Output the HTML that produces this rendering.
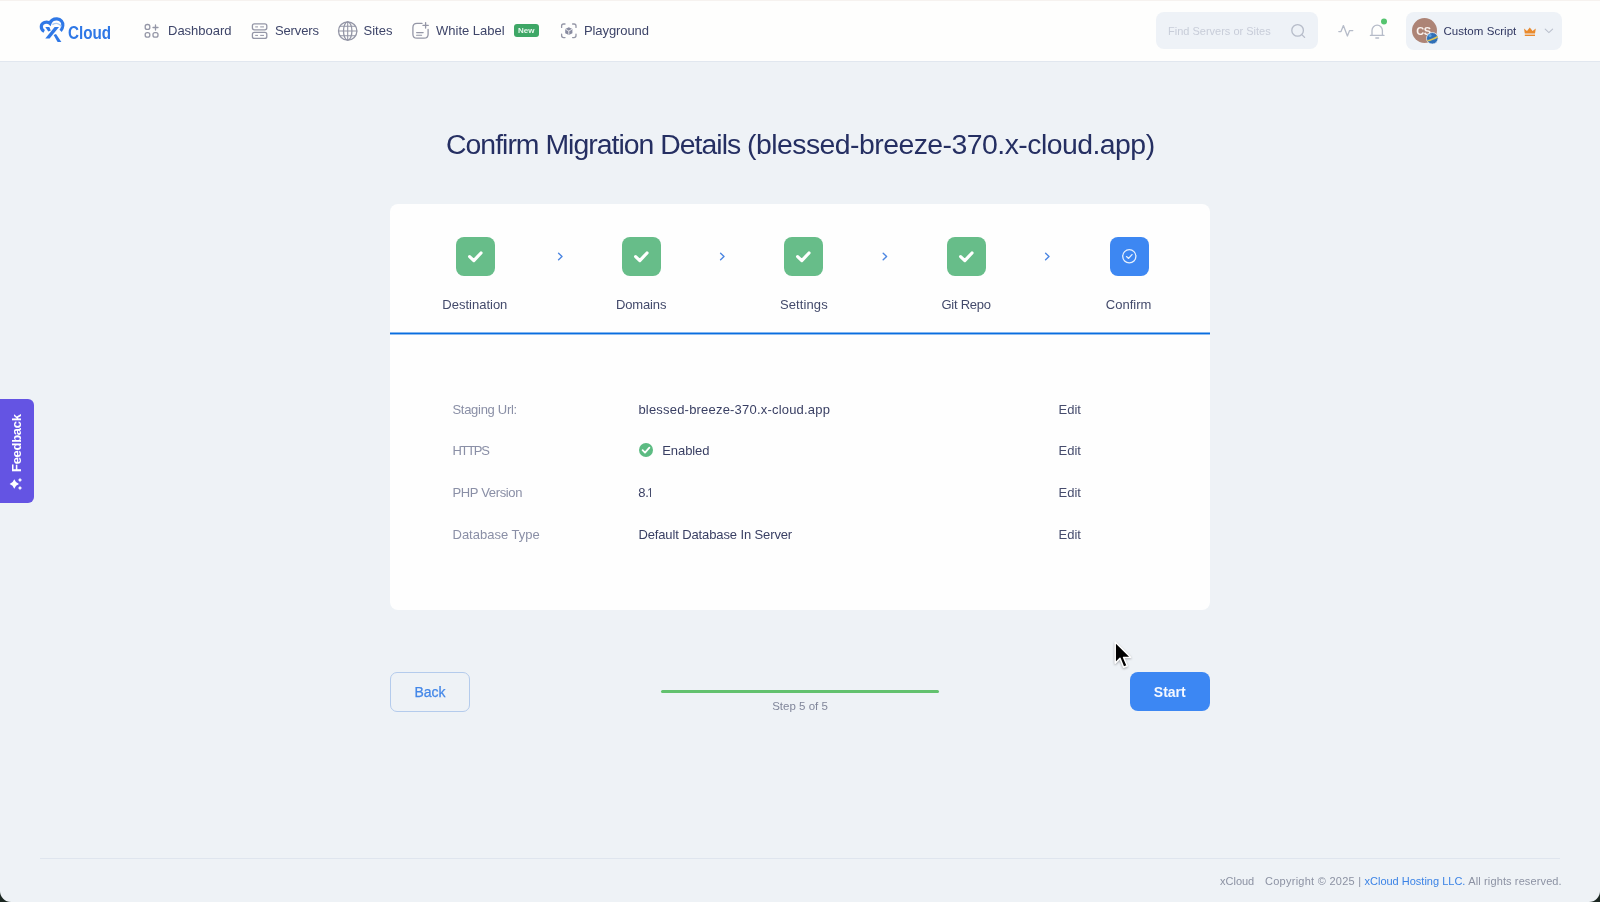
<!DOCTYPE html>
<html><head><meta charset="utf-8">
<style>
*{margin:0;padding:0;box-sizing:border-box}
html,body{width:1600px;height:902px;overflow:hidden;background:#1b2722}
body{font-family:"Liberation Sans",sans-serif;position:relative}
#page{will-change:transform;position:absolute;left:0;top:0;width:1600px;height:902px;background:#eef2f6;border-radius:0 0 11px 11px;overflow:hidden}
.abs{position:absolute}
svg.abs{overflow:visible}
.t{position:absolute;white-space:nowrap;line-height:1}
#hdr{position:absolute;left:0;top:0;width:1600px;height:62px;background:#fefefd;border-bottom:1px solid #e1e7ef}
#topline{position:absolute;left:0;top:0;width:1600px;height:1px;background:#f6f2ef}
.nav{color:#3e4569;font-size:13px;top:24px}
.card{position:absolute;left:390px;top:204px;width:820px;height:406px;background:#fefefe;border-radius:8px}
.stepbox{position:absolute;top:237px;width:39px;height:39px;border-radius:8px;background:#67bd89}
.stepbox svg{position:absolute;left:0;top:0}
.steplbl{position:absolute;top:298px;font-size:13px;color:#434a6b;white-space:nowrap;line-height:1}
.lbl{color:#8a8fa6;font-size:13px}
.val{color:#393f63;font-size:13px}
.edit{color:#464c6d;font-size:13px}
.ico{fill:none;stroke:#9496a6;stroke-width:1.3;stroke-linecap:round;stroke-linejoin:round}
</style></head><body>
<div id="page">
  <div id="hdr"></div>
  <div id="topline"></div>

  <!-- logo -->
  <svg class="abs" style="left:34px;top:12px" width="36" height="34" viewBox="0 0 36 34">
    <path d="M10.2,19.4 C6.4,17.6 6.2,12 10.4,10.6 C12.6,9.9 14.8,10.4 15.9,11.4 C17,8.4 19.8,6.8 23,6.9 C26.8,7 29.2,10 28.8,13.6 C28.6,15.8 27.8,17.6 26.6,18.8" fill="none" stroke="#2f78e6" stroke-width="3.2"/>
    <path d="M18.4,12.6 C21.8,10.6 26,11.2 27.4,14.6" fill="none" stroke="#a9c9f3" stroke-width="1.3"/>
    <polygon points="11.3,26.6 15.6,26.6 25,15 20.6,15" fill="#2f78e6"/>
    <polygon points="11.3,15 15.3,15 16.8,18.4 14.3,19.4" fill="#2f78e6"/>
    <polygon points="19.6,22.9 22,22 27.4,30 23.6,30" fill="#2f78e6"/>
  </svg>
  <div class="t" style="left:68px;top:25px;font-size:17.5px;font-weight:700;color:#2f78e6;transform:scaleX(0.87);transform-origin:0 0">Cloud</div>

  <!-- nav icons -->
  <svg class="abs" style="left:0;top:0" width="700" height="61">
    <g class="ico">
      <rect x="145.2" y="24.5" width="4.6" height="4.9" rx="2"/>
      <path d="M155.5,25 V30 M153,27.5 H158"/>
      <rect x="145.2" y="32.6" width="4.6" height="4.6" rx="2"/>
      <rect x="153" y="32.6" width="5" height="4.6" rx="2"/>

      <rect x="252.4" y="23.8" width="14.4" height="6" rx="2"/>
      <rect x="252.4" y="32.4" width="14.4" height="6" rx="2"/>
      <path d="M255.6,26.9 H257.6 M260.6,26.9 H263.6 M255.6,35.4 H257.6 M260.6,35.4 H263.6" stroke-width="1"/>

      <circle cx="347.7" cy="31" r="9.2"/>
      <ellipse cx="347.7" cy="31" rx="4.2" ry="9.2"/>
      <path d="M347.7,21.8 V40.2 M338.6,31 H356.8 M339.8,26.3 H355.6 M339.8,35.7 H355.6" stroke-width="1.1"/>

      <path d="M422,23.4 H417 C414.3,23.4 412.9,24.8 412.9,27.5 V34.2 C412.9,36.9 414.3,38.2 417,38.2 H424 C426.7,38.2 428.1,36.9 428.1,34.2 V29.5"/>
      <path d="M425.6,22.6 V28 M422.9,25.3 H428.3"/>
      <path d="M416.6,32.6 H423.2 M416.6,35.3 H421.6" stroke-width="1.1"/>

      <path d="M561.6,27.4 V26 C561.6,24.8 562.4,24 563.6,24 H565 M572.6,24 H574 C575.2,24 576,24.8 576,26 V27.4 M576,34.2 V35.6 C576,36.8 575.2,37.6 574,37.6 H572.6 M565,37.6 H563.6 C562.4,37.6 561.6,36.8 561.6,35.6 V34.2"/>
    </g>
    <path d="M568.8,27.2 L572.4,29 V33.2 L568.8,35 L565.2,33.2 V29 Z" fill="#888ba0"/>
    <path d="M565.4,29.2 L568.8,31 L572.2,29.2 M568.8,31 V34.8" stroke="#fefefd" stroke-width="0.8" fill="none"/>
  </svg>

  <!-- nav -->
  <div class="t nav" style="left:168px">Dashboard</div>
  <div class="t nav" style="left:275px;letter-spacing:-0.15px">Servers</div>
  <div class="t nav" style="left:363.5px">Sites</div>
  <div class="t nav" style="left:436px">White Label</div>
  <div class="abs" style="left:514px;top:24.3px;width:25px;height:13px;border-radius:3px;background:#3ea766"></div>
  <div class="t" style="left:518px;top:27px;font-size:8px;font-weight:700;color:#e9f7ee">New</div>
  <div class="t nav" style="left:584px;letter-spacing:-0.1px">Playground</div>

  <!-- search -->
  <div class="abs" style="left:1156px;top:12px;width:162px;height:37px;border-radius:8px;background:#eef2f7"></div>
  <div class="t" style="left:1168px;top:26px;font-size:11px;color:#c8cdd9">Find Servers or Sites</div>
  <svg class="abs" style="left:0;top:0" width="1600" height="61">
    <g fill="none" stroke="#b6bcc9" stroke-width="1.3" stroke-linecap="round" stroke-linejoin="round">
      <circle cx="1297.6" cy="30.4" r="5.8"/>
      <path d="M1301.8,34.6 L1304.6,37.4"/>
      <path d="M1338.8,31.6 H1341 L1343.4,25.6 L1347.4,36 L1349.6,30.6 H1352.8"/>
      <path d="M1372,35.2 V30.6 C1372,27.6 1374.3,25.2 1377.2,25.2 C1380.1,25.2 1382.4,27.6 1382.4,30.6 V35.2 M1370.4,35.4 H1384 M1375.8,38 H1378.6"/>
    </g>
    <circle cx="1384" cy="21.4" r="3" fill="#55c46f"/>
  </svg>

  <!-- user -->
  <div class="abs" style="left:1405.5px;top:12px;width:156px;height:37.5px;border-radius:8px;background:#eef2f7"></div>
  <div class="abs" style="left:1411.7px;top:18px;width:25px;height:25px;border-radius:50%;background:#ad8476"></div>
  <div class="t" style="left:1416.2px;top:26px;font-size:11px;font-weight:700;color:#fbf3ef;letter-spacing:-0.5px">CS</div>
  <svg class="abs" style="left:1426px;top:32px" width="13" height="13" viewBox="0 0 13 13">
    <circle cx="6.3" cy="6.3" r="5.8" fill="#2f6fb6" stroke="#eef2f7" stroke-width="0.8"/>
    <path d="M1.2,8.2 C4,7.6 7.8,5.8 11.6,3.8 L12,5.6 C8.4,7.6 4.6,9.2 1.8,9.6 Z" fill="#d8c35a"/>
    <circle cx="4" cy="3.6" r="1.6" fill="#5aa0e0"/>
  </svg>
  <div class="t" style="left:1443.5px;top:26px;font-size:11.5px;color:#2f3660;letter-spacing:0.05px">Custom Script</div>
  <svg class="abs" style="left:1523px;top:27px" width="14" height="10" viewBox="0 0 14 10">
    <path d="M1,1.6 L4,4 L6.8,0.6 L9.6,4 L12.8,1.6 L12,6.6 H1.8 Z" fill="#ea8a2c"/>
    <rect x="1.8" y="7.6" width="10.2" height="1.4" fill="#ea8a2c"/>
  </svg>
  <svg class="abs" style="left:1544px;top:28px" width="10" height="6" viewBox="0 0 10 6">
    <path d="M1.2,1.2 L4.9,4.6 L8.6,1.2" fill="none" stroke="#b9bfcc" stroke-width="1.1" stroke-linecap="round"/>
  </svg>

  <!-- title -->
  <div class="t" style="left:446px;top:130px;font-size:28.4px;color:#252f62;letter-spacing:-0.98px">Confirm Migration Details</div>
  <div class="t" style="left:747px;top:130px;font-size:28.4px;color:#252f62;letter-spacing:-0.53px">(blessed-breeze-370.x-cloud.app)</div>

  <!-- card -->
  <div class="card"></div>
  <div class="abs" style="left:390px;top:332px;width:820px;height:1px;background:rgba(10,110,224,0.5)"></div>
  <div class="abs" style="left:390px;top:333px;width:820px;height:1px;background:#0a6ee0"></div>
  <div class="abs" style="left:390px;top:334px;width:820px;height:1px;background:rgba(10,110,224,0.45)"></div>

  <div class="stepbox" style="left:455.6px"><svg width="39" height="39"><path d="M13.6,19.6 L17.8,23.6 L25,16" fill="none" stroke="#fff" stroke-width="3.2" stroke-linecap="round" stroke-linejoin="round"/></svg></div>
  <div class="stepbox" style="left:622px"><svg width="39" height="39"><path d="M13.6,19.6 L17.8,23.6 L25,16" fill="none" stroke="#fff" stroke-width="3.2" stroke-linecap="round" stroke-linejoin="round"/></svg></div>
  <div class="stepbox" style="left:784.3px"><svg width="39" height="39"><path d="M13.6,19.6 L17.8,23.6 L25,16" fill="none" stroke="#fff" stroke-width="3.2" stroke-linecap="round" stroke-linejoin="round"/></svg></div>
  <div class="stepbox" style="left:947px"><svg width="39" height="39"><path d="M13.6,19.6 L17.8,23.6 L25,16" fill="none" stroke="#fff" stroke-width="3.2" stroke-linecap="round" stroke-linejoin="round"/></svg></div>
  <div class="stepbox" style="left:1109.8px;background:#3d87f2"><svg width="39" height="39"><circle cx="19.3" cy="19.3" r="6.6" fill="none" stroke="#e6f0fd" stroke-width="1.3"/><path d="M16.5,19.6 L18.6,21.4 L22,17.6" fill="none" stroke="#e6f0fd" stroke-width="1.3" stroke-linecap="round" stroke-linejoin="round"/></svg></div>

  <svg class="abs" style="left:0;top:0" width="1600" height="300">
    <g fill="none" stroke="#4c86e2" stroke-width="1.4" stroke-linecap="round" stroke-linejoin="round">
      <path d="M558.6,253.2 L562,256.5 L558.6,259.8"/>
      <path d="M720.6,253.2 L724,256.5 L720.6,259.8"/>
      <path d="M883.2,253.2 L886.6,256.5 L883.2,259.8"/>
      <path d="M1045.6,253.2 L1049,256.5 L1045.6,259.8"/>
    </g>
  </svg>

  <div class="steplbl" style="left:442.3px">Destination</div>
  <div class="steplbl" style="left:616px;letter-spacing:-0.15px">Domains</div>
  <div class="steplbl" style="left:780px;letter-spacing:0.1px">Settings</div>
  <div class="steplbl" style="left:941.5px;letter-spacing:-0.25px">Git Repo</div>
  <div class="steplbl" style="left:1105.8px">Confirm</div>

  <!-- rows -->
  <div class="t lbl" style="left:452.5px;top:403px;letter-spacing:-0.3px">Staging Url:</div>
  <div class="t val" style="left:638.4px;top:403px;letter-spacing:0.2px">blessed-breeze-370.x-cloud.app</div>
  <div class="t edit" style="left:1058.5px;top:403px">Edit</div>

  <svg class="abs" style="left:638.7px;top:443.2px" width="14" height="14" viewBox="0 0 14 14">
    <circle cx="7" cy="7" r="7" fill="#5cbb82"/>
    <path d="M3.6,7.2 L6,9.6 L10.4,4.6" fill="none" stroke="#fff" stroke-width="1.8" stroke-linecap="round" stroke-linejoin="round"/>
  </svg>
  <div class="t lbl" style="left:452.5px;top:443.5px;letter-spacing:-1.3px">HTTPS</div>
  <div class="t val" style="left:662.3px;top:443.5px;letter-spacing:-0.1px">Enabled</div>
  <div class="t edit" style="left:1058.5px;top:443.5px">Edit</div>

  <div class="t lbl" style="left:452.5px;top:486px;letter-spacing:-0.35px">PHP Version</div>
  <div class="t val" style="left:638.2px;top:486px">8</div>
  <div class="t val" style="left:645.2px;top:486px">.</div>
  <div class="abs" style="left:650.2px;top:488.2px;width:1.25px;height:9px;background:#454b6c"></div>
  <div class="abs" style="left:648.3px;top:489.1px;width:2.6px;height:1.1px;background:#5a6080;transform:rotate(-38deg)"></div>
  <div class="t edit" style="left:1058.5px;top:486px">Edit</div>

  <div class="t lbl" style="left:452.5px;top:528px">Database Type</div>
  <div class="t val" style="left:638.4px;top:528px;letter-spacing:-0.12px">Default Database In Server</div>
  <div class="t edit" style="left:1058.5px;top:528px">Edit</div>

  <!-- bottom -->
  <div class="abs" style="left:389.5px;top:672px;width:80.5px;height:40px;border:1px solid #b4cbec;border-radius:7px"></div>
  <div class="t" style="left:414.4px;top:685px;font-size:14px;color:#4387e8;-webkit-text-stroke:0.25px #4387e8">Back</div>
  <div class="abs" style="left:660.5px;top:690px;width:278.5px;height:3.4px;border-radius:2px;background:#62c16e"></div>
  <div class="t" style="left:772.2px;top:700.5px;font-size:11.5px;color:#80869a">Step 5 of 5</div>
  <div class="abs" style="left:1129.6px;top:672.2px;width:80.8px;height:39.2px;border-radius:8px;background:#3c87f3"></div>
  <div class="t" style="left:1153.8px;top:685px;font-size:14px;color:#f4f8ff;font-weight:700">Start</div>

  <!-- cursor -->
  <svg class="abs" style="left:1113px;top:640px" width="24" height="34" viewBox="0 0 24 34">
    <path d="M2.2,2 L2.2,23.2 L7,18.4 L10.6,27.2 L14.2,25.8 L10.6,17.4 L17.6,17.2 Z" fill="#000" stroke="#fff" stroke-width="1.5" stroke-linejoin="round" style="filter:drop-shadow(0 1px 1px rgba(0,0,0,0.3))"/>
  </svg>

  <!-- footer -->
  <div class="abs" style="left:40px;top:858px;width:1520px;height:1px;background:#dfe5ee"></div>
  <div class="t" style="left:1220px;top:876px;font-size:11px;color:#8c92a3">xCloud</div>
  <div class="t" style="left:1265px;top:876px;font-size:11px;color:#8c92a3;letter-spacing:0.26px">Copyright © 2025 |</div>
  <div class="t" style="left:1364.5px;top:876px;font-size:11px;color:#3b83e6">xCloud Hosting LLC.</div>
  <div class="t" style="left:1468.3px;top:876px;font-size:11px;color:#8c92a3;letter-spacing:0.12px">All rights reserved.</div>

  <!-- feedback -->
  <div class="abs" style="left:0;top:399.3px;width:34px;height:103.7px;background:#6454e3;border-radius:0 6px 6px 0"></div>
  <div class="t" style="left:10px;top:472px;font-size:13px;font-weight:700;color:#fff;transform:rotate(-90deg);transform-origin:0 0;letter-spacing:-0.3px">Feedback</div>
  <svg class="abs" style="left:5px;top:472px" width="24" height="24" viewBox="0 0 24 24">
    <path d="M9.3,7.3 Q10.5,10.8 14,12 Q10.5,13.2 9.3,16.7 Q8.1,13.2 4.6,12 Q8.1,10.8 9.3,7.3 Z" fill="#fff"/>
    <path d="M15,5.8 Q15.5,7.5 17.2,8 Q15.5,8.5 15,10.2 Q14.5,8.5 12.8,8 Q14.5,7.5 15,5.8 Z" fill="#fff"/>
    <path d="M15,13.8 Q15.5,15.5 17.2,16 Q15.5,16.5 15,18.2 Q14.5,16.5 12.8,16 Q14.5,15.5 15,13.8 Z" fill="#fff"/>
  </svg>
</div>
</body></html>
